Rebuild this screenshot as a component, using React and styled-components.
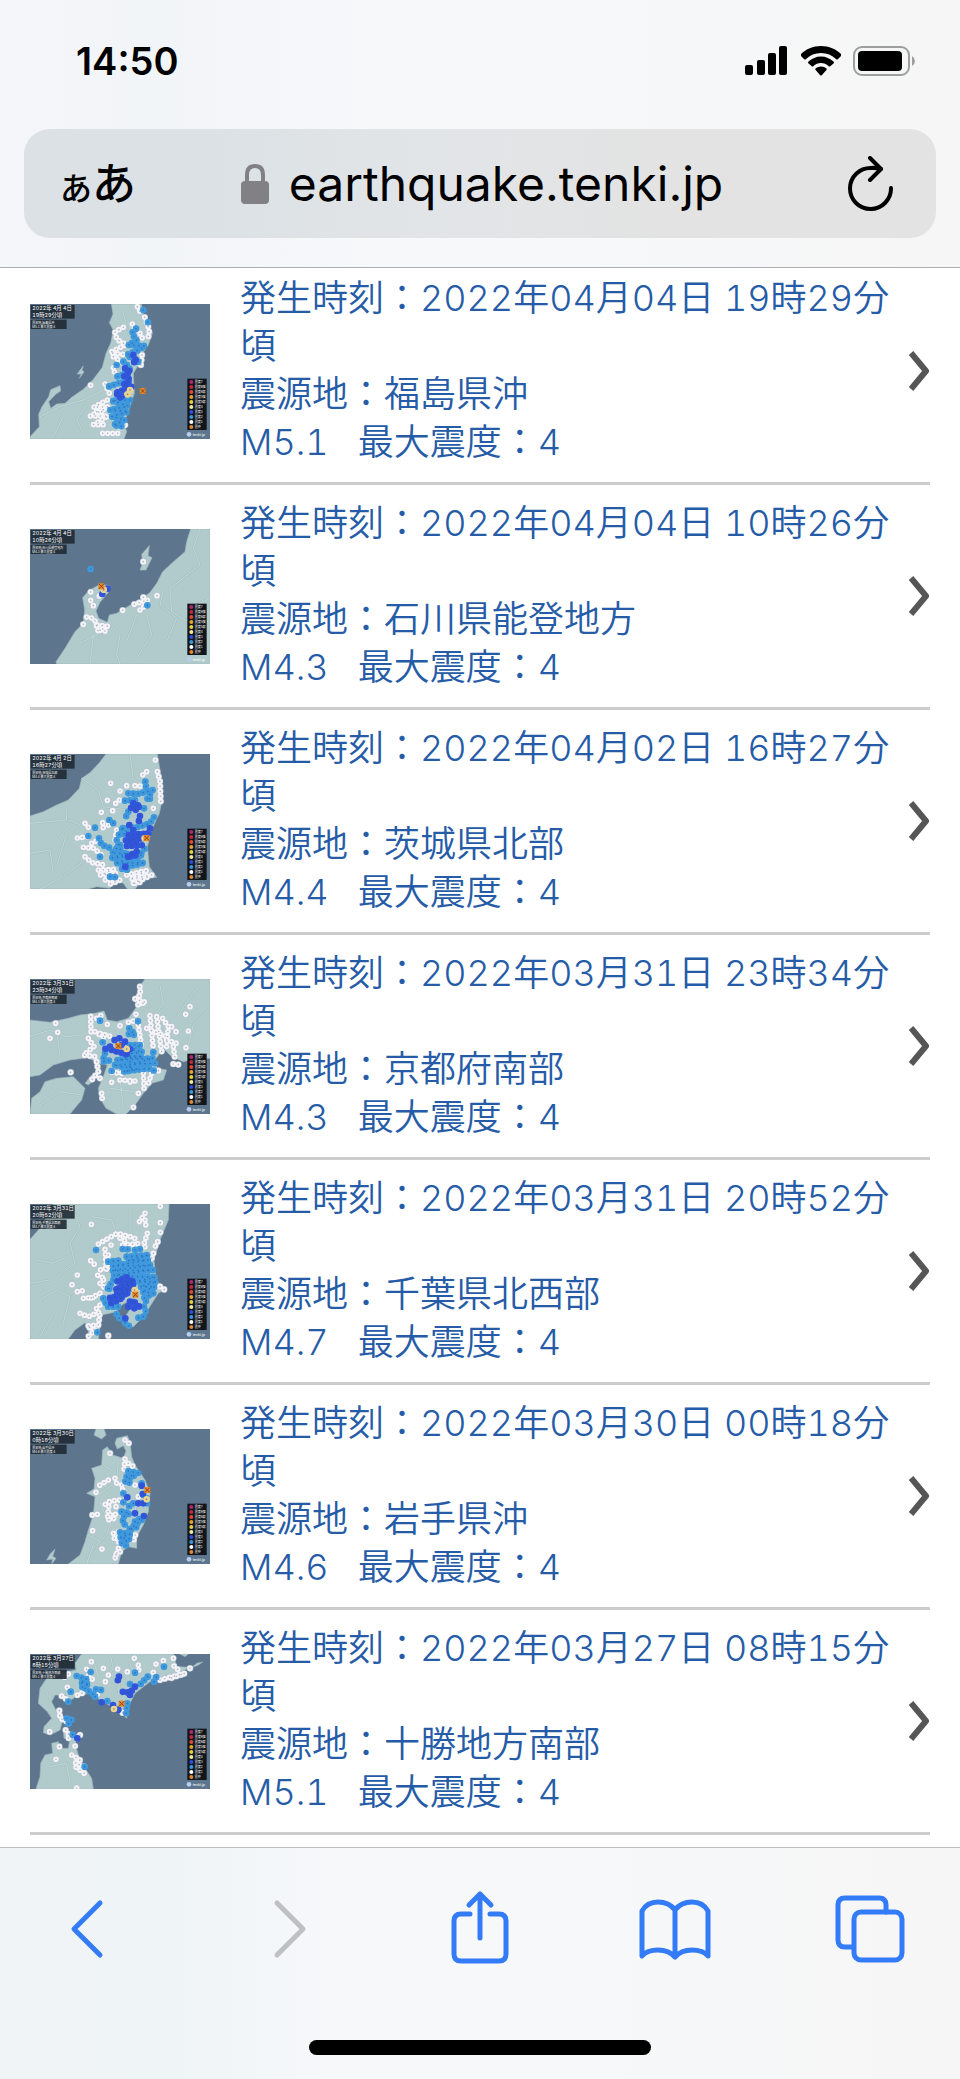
import React from 'react'
import styled, { createGlobalStyle } from 'styled-components'

const GlobalStyle = createGlobalStyle`
  * { box-sizing: border-box; }
  body {
    margin: 0;
    background: #ffffff;
    font-family: Inter, 'Noto Sans CJK JP', sans-serif;
  }
  button {
    border: 0;
    padding: 0;
    background: none;
    color: inherit;
    font: inherit;
    cursor: pointer;
  }
  svg { display: block; }
`

const Screen = styled.div`
  display: flex;
  flex-direction: column;
  min-height: 100vh;
`

const Header = styled.header`
  padding-bottom: 29px;
  border-bottom: 1px solid #acaeb0;
  background: linear-gradient(90deg, #f4f6f9 0%, #f2f5f8 16%, #f6f8fa 38%, #f7f8fa 62%, #f6f6f6 100%);
`

const StatusBar = styled.div`
  display: flex;
  align-items: center;
  justify-content: space-between;
  height: 122px;
  padding: 0 44px 0 76px;
`

const Time = styled.time`
  font-size: 38px;
  font-weight: 600;
  line-height: 48px;
  color: #000000;
`

const StatusIcons = styled.div`
  display: flex;
  align-items: center;
  gap: 12px;
`

const AddressBar = styled.div`
  display: grid;
  grid-template-columns: 1fr auto 1fr;
  align-items: center;
  height: 109px;
  margin: 7px 24px 0;
  padding: 0 42px 0 36px;
  border-radius: 26px;
  background: linear-gradient(90deg, #dce1e5 0%, #dbe1e5 18%, #e2e5e8 45%, #e3e3e3 70%, #e3e3e3 100%);
`

const PageMenu = styled.button`
  display: flex;
  align-items: baseline;
  justify-self: start;
  font-family: 'Noto Sans CJK JP', sans-serif;
  font-size: 44px;
  font-weight: 500;
  line-height: 56px;
`

const SmallKana = styled.span`
  font-size: 32px;
`

const Address = styled.button`
  display: flex;
  align-items: center;
  gap: 20px;
  padding-left: 10px;
  font-size: 48px;
  line-height: 64px;
`

const ReloadButton = styled.button`
  justify-self: end;
`

const List = styled.ul`
  flex: 1;
  margin: 0;
  padding: 0 30px 12px;
  list-style: none;
`

const Item = styled.li`
  border-bottom: 3px solid #cccccc;

  &:first-child > a {
    padding-top: 6px;
  }
`

const Entry = styled.a`
  display: flex;
  align-items: center;
  padding: 14px 0;
  color: #265ca7;
  text-decoration: none;
`

const Info = styled.div`
  flex: 1;
  margin: 0 10px 0 30px;
  padding-bottom: 2px;
  font-size: 36px;
  font-weight: 350;
  line-height: 48px;
  font-variant-numeric: tabular-nums;
`

const Line = styled.div`
  white-space: pre-wrap;
`

const Map = styled.svg`
  flex: none;
  width: 180px;
  height: 135px;
  background: #5d768e;
`

const MapText = styled.text`
  font-family: Inter, 'Noto Sans CJK JP', sans-serif;
  font-variant-numeric: tabular-nums;
  fill: #ffffff;
`

const Footer = styled.footer`
  display: flex;
  flex-direction: column;
  align-items: center;
  justify-content: space-between;
  padding: 40px 50px 24px;
  height: 232px;
  border-top: 1px solid #bcbec0;
  background: linear-gradient(90deg, #f0f4f6 0%, #eff4f6 18%, #f6f8fa 34%, #f7f8fa 60%, #f6f6f6 100%);
`

const Toolbar = styled.nav`
  display: flex;
  justify-content: space-between;
  width: 100%;
`

const Tool = styled.button`
  color: #347bf7;

  &:disabled {
    color: #bfc0c2;
    cursor: default;
  }
`

const HomeIndicator = styled.div`
  width: 40%;
  max-width: 342px;
  height: 15px;
  border-radius: 8px;
  background: #000000;
`

const COLORS = {
  1: '#f3f4f8',
  2: '#3f99dc',
  3: '#3355dc',
  4: '#ecd28c',
}

const LEGEND = [
  ['震度7', '#b0286e'],
  ['震度6強', '#c02a3a'],
  ['震度6弱', '#e2492c'],
  ['震度5強', '#e8a22c'],
  ['震度5弱', '#e8cf3a'],
  ['震度4', '#f0e79c'],
  ['震度3', '#2c4fe0'],
  ['震度2', '#3c98dc'],
  ['震度1', '#ffffff'],
  ['震央', '#e8862c'],
]

// dots are laid along each path, one list of paths per intensity
const quakes = [
  {
    date: '2022年04月04日 19時29分頃', place: '福島県沖', mag: '5.1', max: 4,
    day: '2022年 4月 4日', hour: '19時29分頃',
    land: 'M274 42 L279 72 L268 98 L280 120 L272 160 L258 190 L247 232 L220 268 L190 298 L155 322 L135 340 L110 342 L92 355 L86 335 L108 312 L122 303 L120 287 L92 299 L86 320 L66 350 L56 372 L58 410 L30 440 L30 447 L312 447 L320 425 L312 400 L330 350 L343 310 L340 250 L355 225 L360 200 L385 165 L397 130 L388 105 L370 72 L364 42Z M190 228 L178 243 L172 252 L184 252 L178 265 L192 246 L186 240Z',
    roads: 'M310 70 L320 110 L300 170 L305 250 L270 320 M60 380 L120 350 L190 330 L250 300 M200 345 L170 390 L190 430 M100 440 L130 380',
    dots: [
      [1, 'M352 50 L360 65 M374 82 L388 120 L385 140 M337 102 L345 120 M310 112 L285 125 L290 148 L320 165 L300 172 L270 188 L320 195 M280 200 L305 215 L278 235 L285 250 M360 130 L370 150 M366 195 L362 230 M212 286 L213 287 M255 282 L268 310 M262 330 L220 352 L270 350 L210 378 L265 378 L220 404 L260 404 M248 430 L305 430 M315 405 L300 415 M230 365 L260 365'],
      [2, 'M370 60 L370 62 M384 97 L384 98 M348 116 L335 130 L350 150 L325 165 L375 168 L355 180 L320 195 L355 215 M310 215 L330 235 L300 260 L280 258 M290 225 L292 226 M310 275 L265 290 M330 330 L275 332 L325 348 L270 360 L325 365 L275 380 L315 390 L280 405 L310 410'],
      [3, 'M340 195 L350 215 L335 218 M315 235 L332 245 L312 258 L332 270 L310 285 L335 290 L285 310 L310 322 L290 322 M320 280 L322 305'],
      [4, 'M330 300 L320 318'],
    ],
    epicenter: [368, 303],
  },
  {
    date: '2022年04月04日 10時26分頃', place: '石川県能登地方', mag: '4.3', max: 4,
    day: '2022年 4月 4日', hour: '10時26分頃',
    land: 'M512 42 L500 80 L495 110 L455 145 L428 170 L410 205 L388 235 L345 262 L318 278 L290 295 L268 300 L262 322 L236 310 L228 288 L240 262 L265 232 L268 212 L240 208 L205 228 L188 248 L194 285 L190 325 L165 350 L135 400 L108 440 L110 447 L570 447 L570 42Z M388 92 L365 118 L368 145 L360 165 L378 165 L396 128 L384 122Z',
    roads: 'M180 385 L240 355 L275 330 L300 360 L290 420 L300 447 M540 42 L520 100 L540 150 L450 220 L455 290 L520 330 M380 300 L395 360 L350 430 M430 225 L420 270 L470 310 L440 380 M220 360 L210 447 M350 300 L320 380 M570 250 L500 285 L505 360',
    dots: [
      [1, 'M212 231 L213 232 M238 243 L239 244 M212 256 L213 257 M220 272 L216 285 M200 306 L220 310 M190 328 L191 329 M225 318 L235 350 M232 330 L265 334 M240 346 L265 350 M308 286 L322 287 M343 268 L380 256 M370 247 L385 258 M360 285 L372 275 M411 242 L412 243 M370 140 L371 141 M248 342 L250 343'],
      [2, 'M212 162 L213 163 M382 271 L383 272'],
      [3, 'M262 221 L263 222 M247 237 L248 238'],
      [4, 'M251 224 L252 225'],
    ],
    epicenter: [244, 214],
  },
  {
    date: '2022年04月02日 16時27分頃', place: '茨城県北部', mag: '4.4', max: 4,
    day: '2022年 4月 2日', hour: '16時27分頃',
    land: 'M258 42 L238 68 L210 98 L185 115 L178 145 L145 180 L110 195 L70 215 L30 228 L30 447 L205 447 L230 440 L270 445 L280 420 L310 430 L322 447 L345 447 L372 415 L410 412 L388 380 L382 320 L395 270 L418 220 L428 175 L425 120 L412 42Z',
    roads: 'M185 115 L235 150 L250 200 L320 210 M140 205 L140 240 L30 250 M110 290 L150 240 L180 255 M60 447 L130 410 L195 360 M140 280 L110 380 M330 42 L340 120 L390 140 M30 340 L90 330 L100 400',
    dots: [
      [1, 'M406 60 L407 61 M380 95 L362 110 M412 95 L420 125 L422 185 M400 205 L410 215 M272 130 L274 131 M320 137 L321 138 M345 137 L360 138 M300 153 L301 154 M298 180 L299 181 M262 181 L263 182 M287 190 L288 191 M244 217 L245 218 M278 212 L279 213 M195 250 L196 251 M248 248 L250 270 M172 294 L204 290 M205 262 L206 263 M265 255 L270 260 M215 310 L235 300 M190 322 L222 325 L250 350 M195 350 L215 368 L255 375 M235 390 L280 388 L240 405 L290 400 L255 420 L300 420 L270 432 M320 405 L385 390 L330 418 L395 405 L335 432 L365 425 M290 270 L285 300'],
      [2, 'M376 125 L378 140 M325 160 L352 162 L380 155 L398 150 L380 180 L400 172 M315 182 L345 180 M325 215 L318 230 M372 205 L375 207 M402 232 L390 250 L350 262 L300 265 L330 280 L290 285 M268 240 L280 250 M225 263 L226 264 M205 288 L206 289 M237 295 L245 315 L275 325 M290 300 L302 330 M300 315 L275 340 L325 340 L270 355 L365 345 L285 370 L375 368 L300 385 L325 390 M240 350 L242 362 M270 410 L290 412 M355 350 L375 325'],
      [3, 'M340 190 L362 200 L330 202 L358 214 M360 228 L355 250 M328 255 L330 258 M390 265 L385 280 L325 285 L370 295 L315 300 L355 310 L320 318 L380 315 M350 335 L320 352 L350 345 M340 270 L342 300 M316 380 L317 381'],
      [4, 'M374 295 L375 296'],
    ],
    epicenter: [380, 294],
  },
  {
    date: '2022年03月31日 23時34分頃', place: '京都府南部', mag: '4.3', max: 4,
    day: '2022年 3月31日', hour: '23時34分頃',
    land: 'M375 42 L362 60 L345 100 L350 125 L325 160 L290 170 L262 165 L252 138 L225 145 L180 150 L145 160 L90 172 L30 165 L30 335 L60 330 L100 300 L150 285 L205 278 L235 295 L262 300 L250 335 L235 370 L240 400 L258 430 L290 447 L318 447 L345 420 L370 385 L395 355 L430 345 L440 315 L412 310 L405 285 L430 250 L455 275 L490 290 L530 280 L570 280 L570 42Z M75 350 L110 340 L160 335 L195 370 L185 405 L150 447 L30 447 L35 400 L60 380Z M215 330 L195 355 L205 360 L222 345Z',
    roads: 'M30 215 L90 195 L140 215 L180 210 M110 200 L120 270 M540 60 L500 110 L470 160 M420 60 L430 120 L400 150 M300 340 L310 430 M270 370 L340 380 M570 130 L520 180 L500 260 M60 420 L120 380 L185 390',
    dots: [
      [1, 'M360 65 L362 90 L345 102 L378 112 L352 120 M348 148 L349 149 M212 155 L213 200 M230 160 L245 150 M262 178 L275 176 M300 182 L301 183 M325 172 L340 168 M205 220 L222 245 L190 270 L230 275 M240 205 L275 215 M225 200 L255 220 M355 180 L365 245 M390 152 L400 250 M410 155 L425 260 M428 160 L445 185 L440 245 M380 190 L440 215 M455 185 L456 186 M468 200 L469 201 M460 245 L465 280 M440 225 L470 235 M510 125 L511 126 M497 148 L498 149 M505 198 L506 199 M498 248 L499 249 M460 297 L478 299 M107 175 L108 176 M90 220 L91 221 M113 202 L114 203 M152 322 L153 323 M230 290 L235 320 L215 345 M240 340 L241 341 M275 352 L276 353 M300 345 L345 348 L325 352 M275 322 L305 325 M370 325 L372 370 M395 325 L385 355 M415 317 L430 317 M245 385 L248 408 M340 427 L342 428 M355 385 L365 375'],
      [2, 'M240 167 L241 168 M354 169 L355 170 M328 190 L345 210 L313 205 M248 232 L262 236 M330 240 L365 240 L335 255 L368 260 L310 270 L368 275 L290 285 L400 280 L330 298 L405 295 L280 300 L350 312 L310 320 L385 310 L410 320 M255 265 L248 290 L275 285 M275 318 L262 325 M400 262 L402 265 M330 275 L330 320'],
      [3, 'M298 220 L275 228 M270 245 L255 252 M275 255 L320 268 M330 252 L320 265 M305 240 L307 252 M315 230 L317 232'],
      [4, 'M320 252 L321 253'],
    ],
    epicenter: [295, 243],
  },
  {
    date: '2022年03月31日 20時52分頃', place: '千葉県北西部', mag: '4.7', max: 4,
    day: '2022年 3月31日', hour: '20時52分頃',
    land: 'M100 42 L75 90 L55 120 L30 148 L30 447 L145 447 L165 420 L195 398 L205 415 L205 447 L235 447 L245 375 L290 365 L305 345 L340 325 L350 330 L315 380 L318 412 L340 410 L370 380 L415 310 L435 298 L408 270 L402 210 L420 150 L445 90 L447 42Z',
    roads: 'M160 60 L180 110 L150 160 L165 220 L110 260 M215 80 L275 90 L290 130 M50 210 L100 220 L140 200 M60 330 L110 300 L150 320 L130 400 M100 370 L60 440 M30 280 L90 270 M330 60 L330 120',
    dots: [
      [1, 'M421 49 L422 50 M375 70 L358 95 M375 90 L378 108 M421 98 L422 99 M421 127 L422 128 M382 130 L370 168 L385 175 M413 155 L400 180 M214 103 L215 104 M235 162 L270 142 L292 130 L330 140 L350 147 M273 165 L275 166 M255 178 L260 245 M300 145 L322 155 M308 165 L365 160 M400 190 L395 205 M212 212 L225 225 M265 195 L264 210 M172 255 L173 256 M156 284 L157 285 M233 256 L255 265 L240 280 L255 295 M172 305 L198 300 M220 322 L190 325 M240 310 L205 328 M240 345 L220 365 M180 370 L205 380 L240 365 L235 405 L200 408 L225 420 L205 440 M265 437 L275 442 M420 290 L435 300 M270 230 L240 240'],
      [2, 'M228 180 L230 181 M308 177 L325 178 M345 180 L370 175 M265 215 L295 212 M320 200 L388 195 L325 212 L385 210 L280 228 L395 225 L275 242 L400 240 L280 256 L408 262 L345 275 L410 275 L360 290 L405 290 L365 305 L400 310 L370 325 L385 340 M280 270 L260 300 L280 290 M250 325 L262 350 L300 350 M290 372 L298 385 M370 380 L345 385 M315 398 L330 410 M372 350 L378 365 M232 427 L233 428'],
      [3, 'M320 262 L290 275 L342 272 L300 285 L345 282 L285 298 L335 295 L285 310 L325 310 L265 325 L310 322 L285 335 L270 340 M330 335 L345 338 M325 350 L318 360 M343 355 L360 348 M316 385 L317 386'],
      [4, 'M344 300 L346 302'],
    ],
    epicenter: [346, 314],
  },
  {
    date: '2022年03月30日 00時18分頃', place: '岩手県沖', mag: '4.6', max: 4,
    day: '2022年 3月30日', hour: '0時18分頃',
    land: 'M228 42 L222 60 L245 72 L258 60 L252 42Z M290 70 L322 62 L330 80 L335 125 L345 150 L375 195 L390 235 L385 290 L370 330 L350 365 L350 400 L325 395 L305 410 L295 447 L145 447 L180 420 L195 380 L205 345 L220 300 L225 245 L200 235 L222 222 L225 190 L215 160 L245 150 L248 105 L262 95 L278 120 L310 130 L318 108 L310 92 L292 102 L285 85Z M105 402 L90 418 L80 435 L98 432 L95 447 L108 430 L98 424Z',
    roads: 'M295 140 L290 200 L235 240 M250 150 L275 165 M280 300 L260 360 L220 400 M240 260 L255 300 M205 360 L240 380 M340 250 L350 300 M200 447 L220 390',
    dots: [
      [1, 'M315 75 L330 88 M270 115 L271 116 M315 132 L312 165 M325 145 L345 158 M285 190 L290 205 M265 195 L240 210 L230 215 M228 232 L230 233 M305 210 L308 225 M298 255 L275 258 L248 272 M288 275 L289 276 M286 298 L262 300 M268 260 L262 315 L285 310 M217 300 L232 298 M218 347 L219 348 M280 355 L285 380 M346 360 L338 385 M246 402 L247 403 M295 400 L282 440 M300 410 L280 425 M345 210 L346 211 M355 245 L356 246 M295 350 L296 390'],
      [2, 'M325 168 L360 175 M320 185 L345 180 L315 200 L340 205 M365 205 L375 215 M310 235 L320 245 M370 240 L362 235 M310 262 L325 262 M340 265 L318 280 M305 290 L330 295 L310 305 L308 325 L325 335 M345 320 L380 300 M365 315 L325 345 L355 335 M300 352 L330 358 L300 368 L330 372 L305 385 L325 395 M380 250 L382 275'],
      [3, 'M365 212 L366 213 M368 237 L369 238 M322 247 L332 250 M355 265 L380 265 M345 295 L347 296 M372 303 L373 304'],
      [4, 'M380 253 L381 254'],
    ],
    epicenter: [382, 225],
  },
  {
    date: '2022年03月27日 08時15分頃', place: '十勝地方南部', mag: '5.1', max: 4,
    day: '2022年 3月27日', hour: '8時15分頃',
    land: 'M185 42 L165 70 L168 90 L120 100 L78 118 L60 145 L55 190 L82 215 L95 235 L72 260 L70 278 L90 285 L120 270 L128 240 L110 215 L95 185 L105 165 L135 165 L150 182 L175 165 L210 160 L250 185 L300 215 L320 235 L325 200 L345 160 L390 125 L440 112 L475 100 L510 82 L470 80 L460 42Z M130 265 L160 285 L185 282 L165 310 L175 345 L195 385 L215 415 L220 447 L48 447 L60 410 L62 370 L75 345 L98 340 L95 310 L115 305 L118 325 L145 325 L150 295 L132 295Z M515 83 L535 75 L548 66 L530 70Z M480 42 L495 50 L505 42Z',
    roads: 'M270 42 L280 85 L250 130 M370 42 L330 75 L345 100 M420 50 L400 100 M220 60 L235 110 M90 380 L140 370 L150 430 M75 150 L90 175 M300 110 L295 160',
    dots: [
      [1, 'M343 55 L344 56 M214 65 L215 66 M200 88 L190 88 M250 85 L251 86 M265 105 L266 106 M256 125 L252 135 M293 87 L294 88 M322 95 L322 110 M355 75 L357 95 M408 72 L409 73 M430 62 L431 63 M460 55 L461 56 M462 78 L475 90 M420 120 L495 100 L450 115 M400 97 L402 98 M510 85 L511 86 M145 102 L130 115 M205 108 L220 120 M142 142 L143 143 M125 168 L140 178 M172 165 L190 158 M232 163 L233 164 M118 212 L120 235 L140 245 M89 275 L90 276 M137 270 L150 290 L140 300 M180 285 L182 286 M118 320 L119 321 M108 358 L109 359 M165 318 L175 328 M155 345 L180 360 L165 370 L195 380 M168 382 L200 405 M170 444 L172 445 M308 218 L310 219'],
      [2, 'M212 96 L213 97 M170 108 L200 118 L180 128 L208 132 L175 145 M195 145 L222 165 M228 148 L245 150 M152 155 L153 156 M145 185 L150 186 M345 98 L350 110 M383 110 L362 132 M402 125 L412 105 M432 80 L433 81 M330 132 L332 133 M262 183 L263 184 M322 190 L318 228 M140 235 L155 240 L145 252 M158 284 L159 285 M194 380 L195 381 M225 170 L228 174'],
      [3, 'M297 110 L290 118 L305 130 M345 140 L330 158 L305 155 M330 165 L318 172 M245 187 L250 188 M279 195 L280 196 M295 209 L296 210 M172 295 L173 296'],
      [4, 'M282 207 L283 208'],
    ],
    epicenter: [305, 191],
  },
]

const Dots = ({ level, path }) => (
  <g fill='none' strokeLinecap='round' strokeLinejoin='round' strokeDasharray='0 15'>
    <path d={path} stroke={level === 1 ? '#b5bccb' : COLORS[level]} strokeWidth='20' />
    <path d={path} stroke={COLORS[level]} strokeWidth='17' />
    <path d={path} stroke={level === 1 ? '#8f889c' : '#1c56ae'} strokeWidth='5' opacity='0.6' />
  </g>
)

const QuakeMap = ({ quake }) => {
  const [x, y] = quake.epicenter
  return (
    <Map viewBox='30 42 540 405' role='img' aria-label={quake.place + 'の震度分布図'}>
      <path d={quake.land} fill='#b1cbcc' stroke='#9db6be' strokeWidth='2' />
      <path d={quake.roads} fill='none' stroke='#9cb9bb' strokeWidth='7' opacity='0.5' />
      <path d={quake.roads} fill='none' stroke='#d3e1e2' strokeWidth='2' />
      {quake.dots.map(([level, path]) => <Dots key={level} level={level} path={path} />)}
      <rect x={x - 9} y={y - 9} width='18' height='18' fill='#e8862c' />
      <path d={`M${x - 7} ${y - 7} l14 14 m0 -14 l-14 14`} stroke='#8d4a16' strokeWidth='3' />
      <rect x='32' y='45' width='132' height='41' fill='#1f2a34' opacity='0.9' />
      <MapText x='37' y='61' fontSize='16'>{quake.day}</MapText>
      <MapText x='37' y='80' fontSize='16'>{quake.hour}</MapText>
      <rect x='32' y='89' width='108' height='28' fill='#1f2a34' opacity='0.9' />
      <MapText x='37' y='101' fontSize='9'>{`震源地:${quake.place}`}</MapText>
      <MapText x='37' y='113' fontSize='9'>{`M${quake.mag} 最大震度:${quake.max}`}</MapText>
      <rect x='502' y='266' width='58' height='154' fill='#11161c' />
      {LEGEND.map(([name, color], i) => (
        <g key={name}>
          <circle cx='514' cy={276 + i * 15} r='6' fill={color} />
          <MapText x='524' y={280 + i * 15} fontSize='9'>{name}</MapText>
        </g>
      ))}
      <circle cx='507' cy='433' r='7' fill='#b9cdf0' />
      <MapText x='518' y='438' fontSize='11'>tenki.jp</MapText>
    </Map>
  )
}

const Signal = () => (
  <svg width='44' height='30' viewBox='0 0 44 30'>
    <rect x='0' y='19' width='8' height='10' rx='2' />
    <rect x='12' y='14' width='8' height='15' rx='2' />
    <rect x='23' y='7' width='8' height='22' rx='2' />
    <rect x='34' y='0' width='8' height='29' rx='2' />
  </svg>
)

const Wifi = () => (
  <svg width='40' height='30' viewBox='0 0 40 30'>
    <path d='M20 0 C12 0 5 3 0 8 Q-1 9 0 10 L3 13 Q4 14 5 13 C9 9 14 7 20 7 C26 7 31 9 35 13 Q36 14 37 13 L40 10 Q41 9 40 8 C35 3 28 0 20 0Z' />
    <path d='M20 10.500 C15 10.500 11 12.500 7.500 15.500 Q6.500 16.500 7.500 17.500 L10.500 20 Q11.500 21 12.500 20 C14.500 18 17 17 20 17 C23 17 25.500 18 27.500 20 Q28.500 21 29.500 20 L32.500 17.500 Q33.500 16.500 32.500 15.500 C29 12.500 25 10.500 20 10.500Z' />
    <path d='M20 20.500 C18 20.500 16 21.300 14.500 22.500 Q14 23.300 14.600 24 L19 29 Q20 30 21 29 L25.400 24 Q26 23.300 25.500 22.500 C24 21.300 22 20.500 20 20.500Z' />
  </svg>
)

const Battery = () => (
  <svg width='63' height='30' viewBox='0 0 63 30'>
    <rect x='1' y='1' width='55' height='28' rx='8' fill='none' stroke='#9d9ea0' strokeWidth='2' />
    <rect x='5' y='5' width='44' height='20' rx='4' />
    <path d='M59 10 Q62 12 62 15 Q62 18 59 20Z' fill='#9d9ea0' />
  </svg>
)

const Lock = () => (
  <svg width='28' height='40' viewBox='0 0 28 40' fill='#808085'>
    <path d='M6 19 V11 Q6 2 14 2 Q22 2 22 11 V19' fill='none' stroke='#808085' strokeWidth='4' />
    <rect x='0' y='17' width='28' height='23' rx='4' />
  </svg>
)

const Reload = () => (
  <svg width='46' height='56' viewBox='0 0 46 56' fill='none' stroke='#000000' strokeWidth='4' strokeLinecap='round' strokeLinejoin='round'>
    <path d='M43 32 A20.500 20.500 0 1 1 23 12 Q28 11.500 33 13' />
    <path d='M22 2 L33 13 L22 24' />
  </svg>
)

const Chevron = () => (
  <svg width='21' height='40' viewBox='0 0 21 40' fill='none' stroke='#565656' strokeWidth='6'>
    <path d='M2 2 L17 20 L2 38' strokeLinejoin='round' />
  </svg>
)

const tools = [
  { label: '戻る', icon: <path d='M50 15 L24 41 L50 67' /> },
  { label: '進む', icon: <path d='M32 15 L58 41 L32 67' />, disabled: true },
  {
    label: '共有',
    icon: (
      <>
        <path d='M30 26 H21 Q14 26 14 33 V66 Q14 73 21 73 H59 Q66 73 66 66 V33 Q66 26 59 26 H50' />
        <path d='M40 50 V6 M29 17 L40 6 L51 17' />
      </>
    ),
  },
  {
    label: 'ブックマーク',
    icon: <path d='M40 69 Q34 62 23 62 Q12 62 7 68 V23 Q12 14 23 14 Q34 14 40 22 Q46 14 57 14 Q68 14 73 23 V68 Q68 62 57 62 Q46 62 40 69Z M40 22 V69' />,
  },
  {
    label: 'タブ',
    icon: (
      <>
        <path d='M22 59 H15 Q8 59 8 52 V17 Q8 10 15 10 H49 Q56 10 56 17 V24' />
        <rect x='24' y='24' width='48' height='48' rx='7' />
      </>
    ),
  },
]

export default function App() {
  return (
    <Screen>
      <GlobalStyle />
      <Header>
        <StatusBar>
          <Time>14:50</Time>
          <StatusIcons>
            <Signal />
            <Wifi />
            <Battery />
          </StatusIcons>
        </StatusBar>
        <AddressBar>
          <PageMenu type='button'>
            <SmallKana>あ</SmallKana>あ
          </PageMenu>
          <Address type='button'>
            <Lock />
            earthquake.tenki.jp
          </Address>
          <ReloadButton type='button' aria-label='再読み込み'>
            <Reload />
          </ReloadButton>
        </AddressBar>
      </Header>
      <List>
        {quakes.map((quake) => (
          <Item key={quake.date}>
            <Entry href='#'>
              <QuakeMap quake={quake} />
              <Info>
                <Line>{`発生時刻：${quake.date}`}</Line>
                <Line>{`震源地：${quake.place}`}</Line>
                <Line>{`M${quake.mag}   最大震度：${quake.max}`}</Line>
              </Info>
              <Chevron />
            </Entry>
          </Item>
        ))}
      </List>
      <Footer>
        <Toolbar>
          {tools.map((tool) => (
            <Tool key={tool.label} type='button' aria-label={tool.label} disabled={tool.disabled}>
              <svg width='80' height='80' viewBox='0 0 80 80' fill='none' stroke='currentColor' strokeWidth='5' strokeLinecap='round' strokeLinejoin='round'>
                {tool.icon}
              </svg>
            </Tool>
          ))}
        </Toolbar>
        <HomeIndicator />
      </Footer>
    </Screen>
  )
}
